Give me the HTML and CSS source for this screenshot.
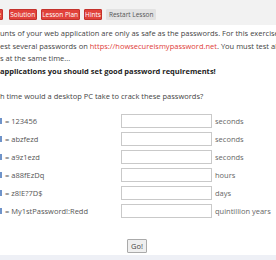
FILE: index.html
```html
<!DOCTYPE html>
<html>
  <head>
    <title>Password strength</title>
    <meta name="viewport" content="width=device-width, initial-scale=1" />
    <link rel="stylesheet" href="styles.css">
  </head>
  <body>
    <div class="page">
      <div class="toolbar">
        <button class="btn btn-red btn-cut">e</button>
        <button class="btn btn-red">Solution</button>
        <button class="btn btn-red">Lesson Plan</button>
        <button class="btn btn-red">Hints</button>
        <button class="btn btn-grey">Restart Lesson</button>
      </div>

      <div class="lesson">
        <p class="line">unts of your web application are only as safe as the passwords. For this exercise</p>
        <p class="line">est several passwords on <a href="#">https://howsecureismypassword.net</a>. You must test all</p>
        <p class="line">s at the same time...</p>
        <p class="line bold">applications you should set good password requirements!</p>
        <p class="line question">h time would a desktop PC take to crack these passwords?</p>
      </div>

      <form class="answers" autocomplete="off">
        <div class="row">
          <label><span class="mark"></span>= 123456</label>
          <input type="text" />
          <span class="unit">seconds</span>
        </div>
        <div class="row">
          <label><span class="mark"></span>= abzfezd</label>
          <input type="text" />
          <span class="unit">seconds</span>
        </div>
        <div class="row">
          <label><span class="mark"></span>= a9z1ezd</label>
          <input type="text" />
          <span class="unit">seconds</span>
        </div>
        <div class="row">
          <label><span class="mark"></span>= a88fEzDq</label>
          <input type="text" />
          <span class="unit">hours</span>
        </div>
        <div class="row">
          <label><span class="mark"></span>= z8!E?7D$</label>
          <input type="text" />
          <span class="unit">days</span>
        </div>
        <div class="row">
          <label><span class="mark"></span>= My1stPassword!:Redd</label>
          <input type="text" />
          <span class="unit">quintillion years</span>
        </div>
        <div class="submit">
          <button type="button" class="go">Go!</button>
        </div>
      </form>
    </div>
    <div class="footer"></div>
  </body>
</html>
```

FILE: styles.css
```css
* {
  padding: 0;
  margin: 0;
  box-sizing: border-box;
}
html,
body {
  width: 276px;
  height: 260px;
  overflow: hidden;
}
body {
  font-family: "Open Sans", "Liberation Sans", sans-serif;
  font-size: 7.5px;
  color: #444444;
  background-color: #ffffff;
}
.page {
  height: 255px;
}
.toolbar {
  display: flex;
  align-items: center;
  gap: 4px;
  height: 25px;
  padding-top: 3px;
  background-color: #f2f2f2;
}
.btn {
  font-family: inherit;
  font-size: 6.5px;
  line-height: 9px;
  padding: 0 0.5px;
  border-radius: 1px;
  white-space: nowrap;
}
.btn-red {
  background-color: #e1423b;
  border: 1px solid #c3322c;
  color: #ffffff;
}
.btn-cut {
  margin-left: -4px;
  margin-right: 2px;
}
.btn-grey {
  padding: 0 1.5px;
  background-color: #e2e2e2;
  border: 1px solid #e2e2e2;
  color: #555555;
}
.lesson {
  padding-top: 2px;
}
.line {
  white-space: nowrap;
  line-height: 12.5px;
}
.line a {
  color: #e0403a;
  text-decoration: none;
}
.bold {
  font-weight: 700;
  color: #222222;
}
.question {
  margin-top: 13px;
}
.answers {
  margin-top: 9px;
}
.row {
  display: flex;
  align-items: center;
  height: 18px;
}
.row label {
  display: flex;
  align-items: center;
  width: 121px;
  color: #555555;
}
.mark {
  display: inline-block;
  width: 1.5px;
  height: 6px;
  margin-right: 3.5px;
  background-color: #6f93c9;
}
.row input {
  width: 91px;
  height: 14px;
  border: 1px solid #c9c9c9;
  outline: none;
}
.unit {
  margin-left: 3px;
  color: #666666;
}
.submit {
  display: flex;
  justify-content: center;
  padding-top: 19px;
}
.go {
  font-family: inherit;
  font-size: 7.5px;
  width: 20px;
  height: 14px;
  margin-left: -2px;
  background-color: #efefef;
  border: 1px solid #aaaaaa;
  border-radius: 1px;
  color: #444444;
}
.footer {
  height: 5px;
  background-color: #eef0f6;
}
```
